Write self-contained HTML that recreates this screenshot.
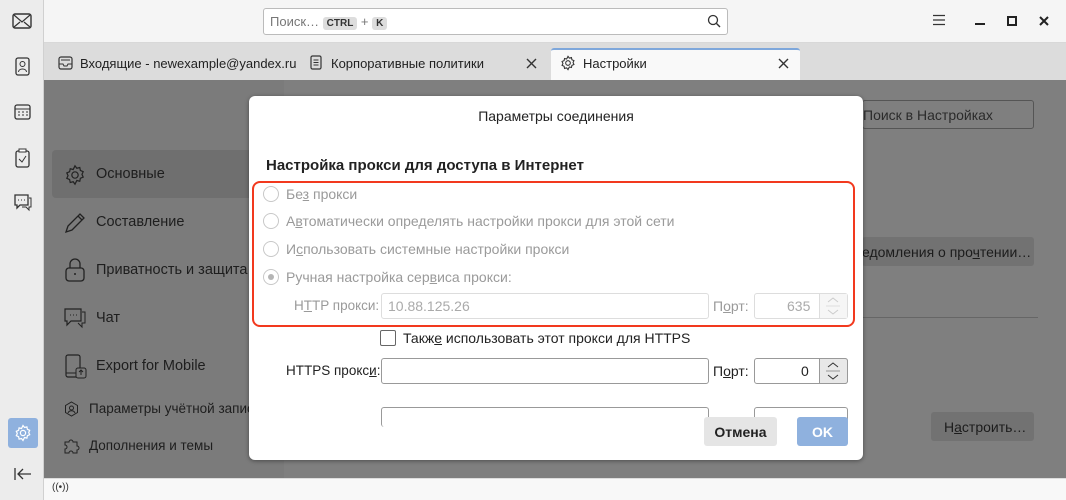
<!DOCTYPE html>
<html><head><meta charset="utf-8"><style>
*{box-sizing:border-box;margin:0;padding:0}
body{width:1066px;height:500px;overflow:hidden;font-family:"Liberation Sans","DejaVu Sans",sans-serif;font-size:14px;color:#222;position:relative;background:#7f7f7f}
.abs{position:absolute}
.strip{left:0;top:0;width:44px;height:500px;background:#ececec;border-right:1px solid #d0d0d0}
.title{left:44px;top:0;right:0;height:43px;background:#f5f5f5;border-bottom:1px solid #d8d8d8}
.tabs{left:44px;top:43px;right:0;height:37px;background:#dcdcdc}
.status{left:44px;top:478px;right:0;height:22px;background:#f8f8f8;border-top:1px solid #ddd}
.nav{left:44px;top:80px;width:240px;height:398px;background:#7b7b7b}
.navi{left:52px;color:#1e1e1e;font-size:14.5px}
.dlg{left:249px;top:96px;width:614px;height:364px;background:#fff;border-radius:6px;box-shadow:0 1px 4px rgba(0,0,0,.4)}
.radio{width:16px;height:16px;border:1px solid #c8c8c8;border-radius:50%;background:#fff}
.g{color:#9a9a9a}
.inp{border:1px solid #c0c0c0;border-radius:3px;background:#fff}
.dis{border-color:#ddd}
u{text-decoration:underline}
</style></head><body>
<div class="abs strip"></div>
<svg class="abs" style="left:12px;top:12px" width="20" height="18"><rect x="1" y="2" width="18" height="14" rx="2" fill="none" stroke="#333" stroke-width="1.4"/><path d="M2 3l8 7 8-7M2 15l6-5M18 15l-6-5" fill="none" stroke="#333" stroke-width="1.2"/></svg>
<svg class="abs" style="left:14px;top:57px" width="16" height="20"><rect x="2" y="1" width="13" height="17" rx="2" fill="none" stroke="#333" stroke-width="1.3"/><circle cx="8.5" cy="7" r="2.5" fill="none" stroke="#333"/><path d="M4.5 15c0-4 8-4 8 0" fill="none" stroke="#333"/></svg>
<svg class="abs" style="left:14px;top:103px" width="17" height="17"><rect x="1" y="2" width="15" height="14" rx="2" fill="none" stroke="#333" stroke-width="1.3"/><path d="M1 6h15M4 9h2M8 9h2M12 9h2M4 12h2M8 12h2M12 12h2" stroke="#333"/></svg>
<svg class="abs" style="left:15px;top:148px" width="15" height="20"><rect x="1" y="3" width="13" height="16" rx="2" fill="none" stroke="#333" stroke-width="1.3"/><rect x="4" y="1" width="7" height="3" fill="#fff" stroke="#333"/><path d="M4 11l3 3 4-6" fill="none" stroke="#333"/></svg>
<svg class="abs" style="left:13px;top:193px" width="20" height="19"><path d="M2 2h13v10H7l-3 3v-3H2z" fill="none" stroke="#333" stroke-width="1.3"/><path d="M16 5h2v9h-2v3l-3-3H9" fill="none" stroke="#333"/><path d="M5 7h1M8 7h1M11 7h1" stroke="#333"/></svg>
<div class="abs" style="left:8px;top:418px;width:30px;height:30px;background:#8fb1de;border-radius:3px"></div>
<svg class="abs" style="left:14px;top:424px" width="18" height="18" viewBox="0 0 18 18"><path d="M9 1.5l1.5 2 2.4-.6.5 2.4 2.3 1-1 2.2 1 2.2-2.3 1-.5 2.4-2.4-.6L9 16.5l-1.5-2-2.4.6-.5-2.4-2.3-1 1-2.2-1-2.2 2.3-1 .5-2.4 2.4.6z" fill="none" stroke="#fff" stroke-width="1.2"/><circle cx="9" cy="9" r="2.6" fill="none" stroke="#fff" stroke-width="1.2"/></svg>
<svg class="abs" style="left:14px;top:467px" width="18" height="14"><path d="M1 1v12M17 7H4M9 2L4 7l5 5" fill="none" stroke="#333" stroke-width="1.3"/></svg>

<div class="abs title"></div>
<div class="abs inp" style="left:263px;top:8px;width:465px;height:27px;border-color:#bbb;font-size:13px;color:#777;padding:5px 0 0 6px">Поиск… <span style="background:#ddd;border-radius:3px;font-size:10px;padding:1px 4px;color:#333;font-weight:bold">CTRL</span> + <span style="background:#ddd;border-radius:3px;font-size:10px;padding:1px 4px;color:#333;font-weight:bold">K</span></div>
<svg class="abs" style="left:707px;top:14px" width="14" height="14"><circle cx="6" cy="6" r="4.5" fill="none" stroke="#333" stroke-width="1.3"/><path d="M9.5 9.5l3.5 3.5" stroke="#333" stroke-width="1.4"/></svg>
<svg class="abs" style="left:932px;top:14px" width="14" height="12"><path d="M1 1.5h12M1 6h12M1 10.5h12" stroke="#333" stroke-width="1.3"/></svg>
<div class="abs" style="left:975px;top:23px;width:10px;height:2px;background:#222"></div>
<div class="abs" style="left:1007px;top:16px;width:10px;height:10px;border:2px solid #222"></div>
<svg class="abs" style="left:1039px;top:16px" width="10" height="10"><path d="M1 1l8 8M9 1l-8 8" stroke="#222" stroke-width="2"/></svg>

<div class="abs tabs"></div>
<svg class="abs" style="left:58px;top:56px" width="15" height="14"><rect x="1" y="1" width="13" height="12" rx="2" fill="none" stroke="#333" stroke-width="1.2"/><path d="M1 8h4l1 2h3l1-2h4M3 4h9" fill="none" stroke="#333"/></svg>
<div class="abs" style="left:80px;top:56px;font-size:13px">Входящие - newexample@yandex.ru</div>
<svg class="abs" style="left:310px;top:55px" width="12" height="15"><rect x="1" y="1" width="10" height="13" rx="1.5" fill="none" stroke="#333" stroke-width="1.2"/><path d="M3.5 5h5M3.5 7.5h5M3.5 10h5" stroke="#333"/></svg>
<div class="abs" style="left:331px;top:56px;font-size:13px">Корпоративные политики</div>
<svg class="abs" style="left:526px;top:58px" width="11" height="11"><path d="M1 1l9 9M10 1l-9 9" stroke="#333" stroke-width="1.4"/></svg>
<div class="abs" style="left:551px;top:48px;width:249px;height:32px;background:#f9f9f9;border-top:2px solid #7ea7db;border-radius:3px 3px 0 0"></div>
<svg class="abs" style="left:560px;top:55px" width="16" height="16" viewBox="0 0 18 18"><path d="M9 1.5l1.5 2 2.4-.6.5 2.4 2.3 1-1 2.2 1 2.2-2.3 1-.5 2.4-2.4-.6L9 16.5l-1.5-2-2.4.6-.5-2.4-2.3-1 1-2.2-1-2.2 2.3-1 .5-2.4 2.4.6z" fill="none" stroke="#333" stroke-width="1.2"/><circle cx="9" cy="9" r="2.6" fill="none" stroke="#333" stroke-width="1.2"/></svg>
<div class="abs" style="left:583px;top:56px;font-size:13px">Настройки</div>
<svg class="abs" style="left:778px;top:58px" width="11" height="11"><path d="M1 1l9 9M10 1l-9 9" stroke="#333" stroke-width="1.4"/></svg>

<div class="abs nav"></div>
<div class="abs" style="left:52px;top:150px;width:210px;height:48px;background:#6f6f6f;border-radius:4px"></div>
<div class="abs navi" style="left:96px;top:166px">Основные</div>
<div class="abs navi" style="left:96px;top:214px">Составление</div>
<div class="abs navi" style="left:96px;top:262px">Приватность и защита</div>
<div class="abs navi" style="left:96px;top:310px">Чат</div>
<div class="abs navi" style="left:96px;top:358px">Export for Mobile</div>
<div class="abs navi" style="left:89px;top:401px;font-size:13.5px">Параметры учётной записи</div>
<div class="abs navi" style="left:89px;top:438px;font-size:13.5px">Дополнения и темы</div>
<svg class="abs" style="left:64px;top:164px" width="22" height="22" viewBox="0 0 18 18"><path d="M9 1.5l1.5 2 2.4-.6.5 2.4 2.3 1-1 2.2 1 2.2-2.3 1-.5 2.4-2.4-.6L9 16.5l-1.5-2-2.4.6-.5-2.4-2.3-1 1-2.2-1-2.2 2.3-1 .5-2.4 2.4.6z" fill="none" stroke="#222" stroke-width="1"/><circle cx="9" cy="9" r="2.6" fill="none" stroke="#222"/></svg>
<svg class="abs" style="left:64px;top:212px" width="22" height="22"><path d="M2 20l2-6L16 2l4 4L8 18z M14 4l4 4" fill="none" stroke="#222" stroke-width="1.3"/></svg>
<svg class="abs" style="left:65px;top:258px" width="20" height="24"><rect x="1" y="10" width="18" height="13" rx="3" fill="none" stroke="#222" stroke-width="1.3"/><path d="M5 10V6a5 5 0 0 1 10 0v4" fill="none" stroke="#222" stroke-width="1.3"/><circle cx="10" cy="16" r="1" fill="#222"/></svg>
<svg class="abs" style="left:63px;top:307px" width="24" height="22"><path d="M2 2h16v12H8l-4 4v-4H2z" fill="none" stroke="#222" stroke-width="1.2"/><path d="M19 5h3v11h-3v4l-4-4" fill="none" stroke="#222"/><path d="M7 8h1M10 8h1M13 8h1" stroke="#222"/></svg>
<svg class="abs" style="left:65px;top:354px" width="22" height="26"><rect x="1" y="1" width="14" height="22" rx="2" fill="none" stroke="#222" stroke-width="1.2"/><path d="M1 19h10" stroke="#222"/><rect x="11" y="14" width="10" height="10" rx="2" fill="#7b7b7b" stroke="#222"/><path d="M16 21v-5M14 18l2-2 2 2" fill="none" stroke="#222"/></svg>
<svg class="abs" style="left:64px;top:401px" width="15" height="16"><path d="M7.5 1l6 3.5v7l-6 3.5-6-3.5v-7z" fill="none" stroke="#222"/><circle cx="7.5" cy="7" r="2" fill="none" stroke="#222"/><path d="M4 12c1-3 6-3 7 0" fill="none" stroke="#222"/></svg>
<svg class="abs" style="left:63px;top:437px" width="17" height="17"><path d="M2 5h4a2 2 0 1 1 4 0h4v4a2 2 0 1 1 0 4v3h-4a2 2 0 1 0-4 0H2v-4a2 2 0 1 0 0-4z" fill="none" stroke="#222"/></svg>

<div class="abs" style="left:862px;top:100px;width:172px;height:29px;border:1px solid #555;border-radius:3px;color:#2b2b2b;padding:6px 0 0 0">Поиск в Настройках</div>
<div class="abs" style="left:862px;top:237px;width:172px;height:29px;background:#727272;border-radius:3px;color:#1c1c1c;padding:7px 0 0 0;overflow:hidden;white-space:nowrap">едомления о про<u>ч</u>тении…</div>
<div class="abs" style="left:862px;top:317px;width:176px;height:1px;background:#666"></div>
<div class="abs" style="left:931px;top:412px;width:103px;height:29px;background:#727272;border-radius:3px;color:#1c1c1c;padding:7px 0 0 13px">Н<u>а</u>строить…</div>

<div class="abs status"></div>
<div class="abs" style="left:52px;top:482px;font-size:10px;color:#333">((•))</div>

<div class="abs dlg">
 <div class="abs" style="left:0;width:614px;top:12px;text-align:center;font-size:14px">Параметры соединения</div>
 <div class="abs" style="left:17px;top:61px;font-size:15px;font-weight:bold">Настройка прокси для доступа в Интернет</div>
 <div class="abs" style="left:3px;top:85px;width:603px;height:146px;border:2px solid #f2391e;border-radius:8px"></div>
 <div class="abs radio" style="left:14px;top:90px"></div><div class="abs g" style="left:37px;top:90px">Бе<u>з</u> прокси</div>
 <div class="abs radio" style="left:14px;top:117px"></div><div class="abs g" style="left:37px;top:117px">А<u>в</u>томатически определять настройки прокси для этой сети</div>
 <div class="abs radio" style="left:14px;top:145px"></div><div class="abs g" style="left:37px;top:145px">И<u>с</u>пользовать системные настройки прокси</div>
 <div class="abs radio" style="left:14px;top:173px"></div><div class="abs" style="left:19px;top:178px;width:6px;height:6px;border-radius:50%;background:#b5b5b5"></div><div class="abs g" style="left:37px;top:173px">Ручная настройка сер<u>в</u>иса прокси:</div>
 <div class="abs g" style="left:45px;top:202px;font-size:13.5px">H<u>T</u>TP прокси:</div>
 <div class="abs inp dis" style="left:132px;top:197px;width:328px;height:26px;color:#aaa;padding:4px 0 0 6px">10.88.125.26</div>
 <div class="abs g" style="left:464px;top:202px">П<u>о</u>рт:</div>
 <div class="abs inp dis" style="left:505px;top:197px;width:94px;height:26px;color:#aaa;padding:4px 0 0 32px">635</div>
 <div class="abs" style="left:570px;top:198px;width:28px;height:24px;background:#f6f6f6;border-left:1px solid #ddd"></div>
 <svg class="abs" style="left:577px;top:200px" width="14" height="20"><path d="M2 6l5-4 5 4M2 14l5 4 5-4" fill="none" stroke="#ccc"/><path d="M0 10h14" stroke="#ddd"/></svg>
 <div class="abs" style="left:131px;top:234px;width:16px;height:16px;border:1px solid #666;border-radius:2px"></div>
 <div class="abs" style="left:154px;top:234px">Такж<u>е</u> использовать этот прокси для HTTPS</div>
 <div class="abs" style="left:37px;top:267px;font-size:13.5px">HTTPS прокс<u>и</u>:</div>
 <div class="abs inp" style="left:132px;top:262px;width:328px;height:26px;border-color:#999"></div>
 <div class="abs" style="left:464px;top:267px">П<u>о</u>рт:</div>
 <div class="abs inp" style="left:505px;top:262px;width:94px;height:26px;border-color:#999;padding:4px 0 0 46px">0</div>
 <div class="abs" style="left:570px;top:262px;width:29px;height:26px;background:#e8e8e8;border:1px solid #999;border-radius:0 3px 3px 0"></div>
 <svg class="abs" style="left:577px;top:265px" width="14" height="20"><path d="M2 6l5-4 5 4M2 14l5 4 5-4" fill="none" stroke="#333"/><path d="M0 10h14" stroke="#999"/></svg>
 <div class="abs inp" style="left:132px;top:311px;width:328px;height:20px;border-color:#999;border-bottom:none"></div>
 <div class="abs inp" style="left:505px;top:311px;width:94px;height:20px;border-color:#999;border-bottom:none"></div>
 <div class="abs" style="left:455px;top:321px;width:73px;height:29px;background:#e5e5e5;border-radius:3px;font-weight:bold;text-align:center;padding-top:7px">Отмена</div>
 <div class="abs" style="left:548px;top:321px;width:51px;height:29px;background:#8fb1de;border-radius:3px;font-weight:bold;color:#fff;text-align:center;padding-top:7px">OK</div>
</div>
</body></html>
